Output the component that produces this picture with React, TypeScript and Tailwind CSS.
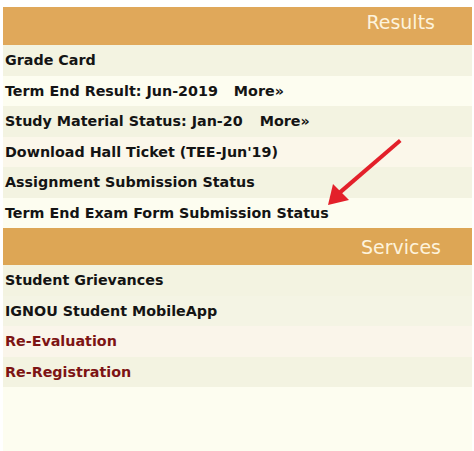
import React from 'react';

type Item = { label: string; more?: string; red?: boolean; bg: string };

const results: Item[] = [
    { label: 'Grade Card', bg: 'bg-[#f3f3e1]' },
    { label: 'Term End Result: Jun-2019', more: 'ml-[16px]', bg: 'bg-[#fdfdf0]' },
    { label: 'Study Material Status: Jan-20', more: 'ml-[17px]', bg: 'bg-[#f3f3e1]' },
    { label: "Download Hall Ticket (TEE-Jun'19)", bg: 'bg-[#fbf7ea]' },
    { label: 'Assignment Submission Status', bg: 'bg-[#f3f3e1]' },
    { label: 'Term End Exam Form Submission Status', bg: 'bg-[#fdfdf0]' },
];

const services: Item[] = [
    { label: 'Student Grievances', bg: 'bg-[#f3f3e1]' },
    { label: 'IGNOU Student MobileApp', bg: 'bg-[#f4f4e4]' },
    { label: 'Re-Evaluation', red: true, bg: 'bg-[#faf5ea]' },
    { label: 'Re-Registration', red: true, bg: 'bg-[#f3f3e1]' },
];

function Row({ item }: { item: Item }) {
    return (
        <div
            className={`h-[30.5px] flex items-center pl-[2px] text-[14.3px] font-bold leading-none ${item.bg} ${
                item.red ? 'text-[#7d1414]' : 'text-[#141414]'
            }`}
        >
            <span className="whitespace-pre">{item.label}</span>
            {item.more && <span className={item.more}>More»</span>}
        </div>
    );
}

export default function App() {
    return (
        <div
            className="relative w-[474px] h-[451px] overflow-hidden bg-white pt-[7px] pl-[3px] pr-[2px]"
            style={{ fontFamily: '"DejaVu Sans", Verdana, sans-serif' }}
        >
            <div className="h-full bg-[#fdfdf0]">
                <div className="h-[38px] bg-[#e0a85a] flex justify-end items-start pt-[4px] pr-[37px]">
                    <span className="text-[19px] leading-[22px] text-[#fdf3dc]">Results</span>
                </div>
                {results.map((r) => (
                    <Row key={r.label} item={r} />
                ))}
                <div className="h-[37px] bg-[#dda655] flex justify-end items-center pr-[31px]">
                    <span className="text-[19px] leading-[22px] text-[#fdf3dc]">Services</span>
                </div>
                {services.map((r) => (
                    <Row key={r.label} item={r} />
                ))}
            </div>

            <svg className="absolute left-0 top-0 pointer-events-none" width="474" height="451" viewBox="0 0 474 451">
                <polygon points="399,139 401.5,142 339,196 336,193" fill="#e3202a" />
                <polygon points="328,205 333,184 349,200" fill="#e3202a" />
            </svg>
        </div>
    );
}
